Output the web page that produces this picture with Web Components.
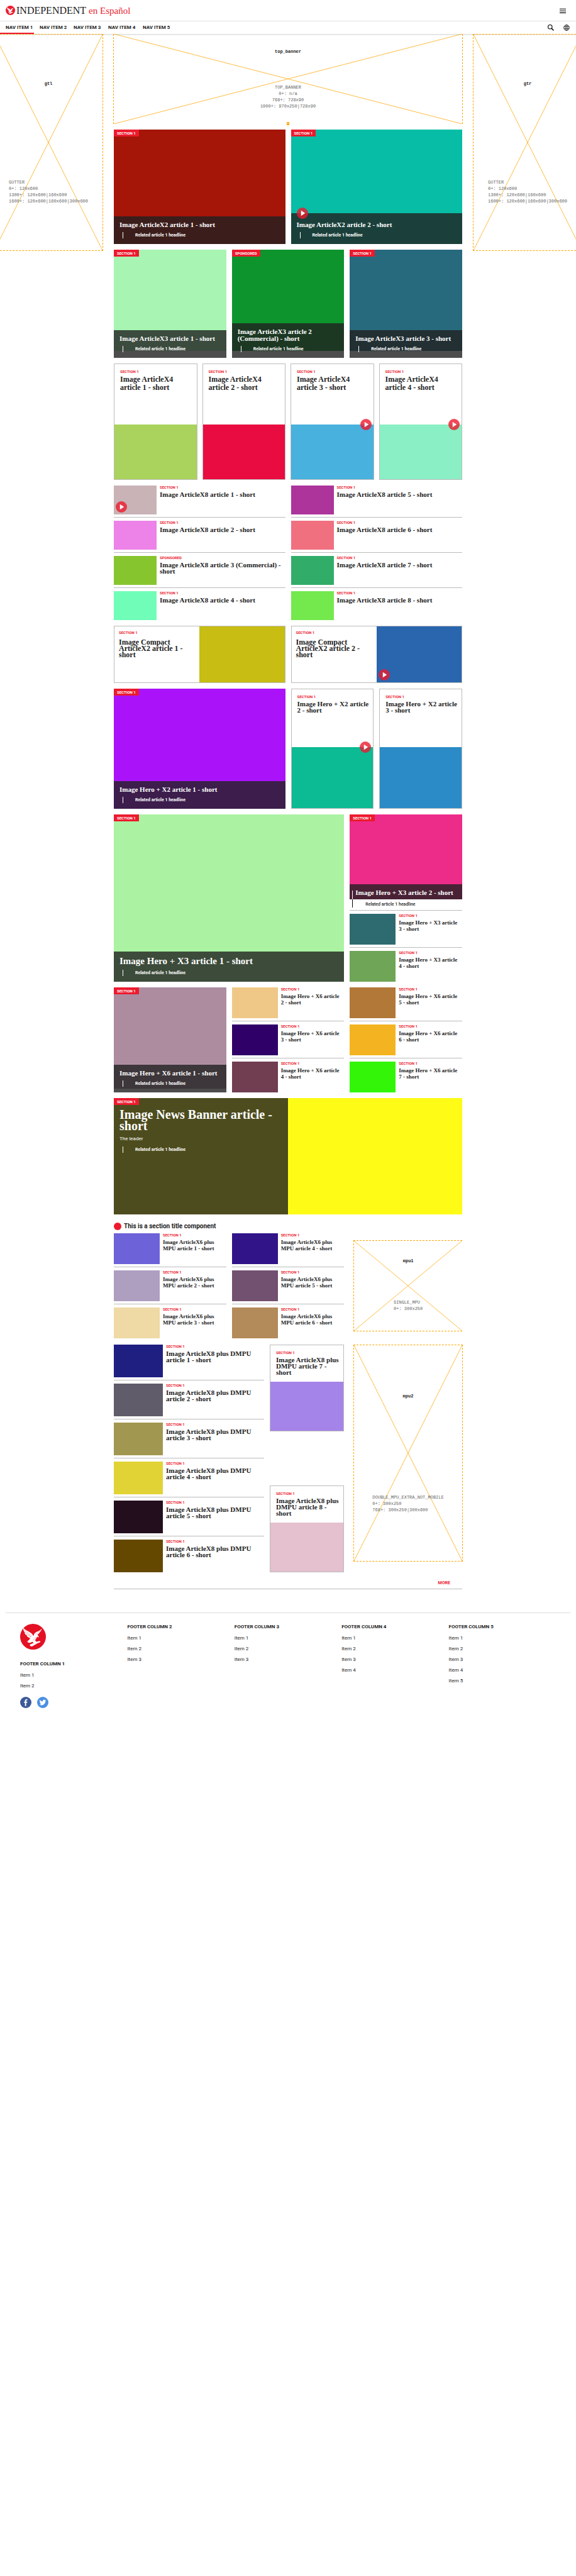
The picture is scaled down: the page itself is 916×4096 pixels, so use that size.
<!DOCTYPE html>
<html lang="es">
<head>
<meta charset="utf-8">
<meta name="viewport" content="width=device-width, initial-scale=1">
<title>Independent en Español</title>
<style>
  body {
    margin: 0;
    background: #fff;
    color: #222;
    font-family: Roboto, "Open Sans", sans-serif;
    font-size: 8px;
    --red: #ec1a2e;
    --rule: #bbb;
    --veil: rgba(32, 32, 32, .8);
    --serif: "Liberation Serif", serif;
    --mono: "Liberation Mono", monospace;
  }
</style>
</head>
<body>
<ind-header></ind-header>
<ind-layout>
  <ind-ad slot="left" name="gtl" sizes="GUTTER;0+: 120x600;1300+: 120x600|160x600;1600+: 120x600|160x600|300x600" style="--h:345px;--lift:15px"></ind-ad>
  <ind-ad slot="right" name="gtr" sizes="GUTTER;0+: 120x600;1300+: 120x600|160x600;1600+: 120x600|160x600|300x600" style="--h:345px;--lift:15px"></ind-ad>

  <ind-ad name="top_banner" sizes="TOP_BANNER;0+: n/a;768+: 728x90;1000+: 970x250|728x90" sides center marker style="--h:143px;--lift:15px"></ind-ad>

  <ind-row kind="x2" style="--h:182px">
    <ind-overlay color="#a51508" label="SECTION 1" related="Related article 1 headline">Image ArticleX2 article 1 - short</ind-overlay>
    <ind-overlay color="#08bda5" label="SECTION 1" related="Related article 1 headline" play>Image ArticleX2 article 2 - short</ind-overlay>
  </ind-row>

  <ind-row kind="x3" style="--h:172px;--media:161px">
    <ind-overlay color="#a7f4b3" label="SECTION 1" related="Related article 1 headline">Image ArticleX3 article 1 - short</ind-overlay>
    <ind-overlay color="#0d942d" label="SPONSORED" related="Related article 1 headline">Image ArticleX3 article 2 (Commercial) - short</ind-overlay>
    <ind-overlay color="#286a7d" label="SECTION 1" related="Related article 1 headline">Image ArticleX3 article 3 - short</ind-overlay>
  </ind-row>

  <ind-row kind="x4" style="--h:185px;--media:87px;--size:12px;--lead:13px">
    <ind-card color="#a9d35c" label="SECTION 1">Image ArticleX4 article 1 - short</ind-card>
    <ind-card color="#e90c40" label="SECTION 1">Image ArticleX4 article 2 - short</ind-card>
    <ind-card color="#49b1dd" label="SECTION 1" play>Image ArticleX4 article 3 - short</ind-card>
    <ind-card color="#8aefc4" label="SECTION 1" play>Image ArticleX4 article 4 - short</ind-card>
  </ind-row>

  <ind-row kind="x2">
    <ind-list style="--thumb:68px;--thumb-h:46px">
      <ind-thumb color="#c9b3b6" label="SECTION 1" play>Image ArticleX8 article 1 - short</ind-thumb>
      <ind-thumb color="#ed83e8" label="SECTION 1">Image ArticleX8 article 2 - short</ind-thumb>
      <ind-thumb color="#87c52f" label="SPONSORED">Image ArticleX8 article 3 (Commercial) - short</ind-thumb>
      <ind-thumb color="#70fdb8" label="SECTION 1">Image ArticleX8 article 4 - short</ind-thumb>
    </ind-list>
    <ind-list style="--thumb:68px;--thumb-h:46px">
      <ind-thumb color="#ad349b" label="SECTION 1">Image ArticleX8 article 5 - short</ind-thumb>
      <ind-thumb color="#f07080" label="SECTION 1">Image ArticleX8 article 6 - short</ind-thumb>
      <ind-thumb color="#31ad69" label="SECTION 1">Image ArticleX8 article 7 - short</ind-thumb>
      <ind-thumb color="#74e94e" label="SECTION 1">Image ArticleX8 article 8 - short</ind-thumb>
    </ind-list>
  </ind-row>

  <ind-row kind="x2" style="--h:91px;--size:12px">
    <ind-compact color="#c7bd13" label="SECTION 1">Image Compact ArticleX2 article 1 - short</ind-compact>
    <ind-compact color="#2966ae" label="SECTION 1" play>Image Compact ArticleX2 article 2 - short</ind-compact>
  </ind-row>

  <ind-row kind="x2" style="--h:191px">
    <ind-overlay color="#aa13fa" label="SECTION 1" related="Related article 1 headline">Image Hero + X2 article 1 - short</ind-overlay>
    <ind-row kind="x2" style="--media:97px">
      <ind-card color="#0cba94" label="SECTION 1" play>Image Hero + X2 article 2 - short</ind-card>
      <ind-card color="#2b8bc6" label="SECTION 1">Image Hero + X2 article 3 - short</ind-card>
    </ind-row>
  </ind-row>

  <ind-row kind="x3">
    <ind-overlay wide color="#abf3a2" label="SECTION 1" related="Related article 1 headline" style="--size:15px;--lead:15px">Image Hero + X3 article 1 - short</ind-overlay>
    <ind-list style="--thumb:73px;--thumb-h:49px;--size:9px">
      <ind-overlay color="#ed2c89" label="SECTION 1" below="Related article 1 headline" style="--h:135px;--size:11px">Image Hero + X3 article 2 - short</ind-overlay>
      <ind-thumb color="#2e6b70" label="SECTION 1">Image Hero + X3 article 3 - short</ind-thumb>
      <ind-thumb color="#6fa556" label="SECTION 1">Image Hero + X3 article 4 - short</ind-thumb>
    </ind-list>
  </ind-row>

  <ind-row kind="x3">
    <ind-overlay color="#ad8ca0" label="SECTION 1" related="Related article 1 headline" style="--media:161px">Image Hero + X6 article 1 - short</ind-overlay>
    <ind-list style="--thumb:73px;--thumb-h:49px;--size:9px">
      <ind-thumb color="#efc887" label="SECTION 1">Image Hero + X6 article 2 - short</ind-thumb>
      <ind-thumb color="#300069" label="SECTION 1">Image Hero + X6 article 3 - short</ind-thumb>
      <ind-thumb color="#703d51" label="SECTION 1">Image Hero + X6 article 4 - short</ind-thumb>
    </ind-list>
    <ind-list style="--thumb:73px;--thumb-h:49px;--size:9px">
      <ind-thumb color="#b27838" label="SECTION 1">Image Hero + X6 article 5 - short</ind-thumb>
      <ind-thumb color="#f4b421" label="SECTION 1">Image Hero + X6 article 6 - short</ind-thumb>
      <ind-thumb color="#33f508" label="SECTION 1">Image Hero + X6 article 7 - short</ind-thumb>
    </ind-list>
  </ind-row>

  <ind-banner color="#fefb16" label="SECTION 1" leader="The leader" related="Related article 1 headline" style="--h:185px;--size:20px;--lead:18px">Image News Banner article - short</ind-banner>

  <ind-section heading="This is a section title component">
    <ind-row kind="x3">
      <ind-list style="--thumb:73px;--thumb-h:49px;--size:9px">
        <ind-thumb color="#6e62d9" label="SECTION 1">Image ArticleX6 plus MPU article 1 - short</ind-thumb>
        <ind-thumb color="#ae9ec0" label="SECTION 1">Image ArticleX6 plus MPU article 2 - short</ind-thumb>
        <ind-thumb color="#efd9a4" label="SECTION 1">Image ArticleX6 plus MPU article 3 - short</ind-thumb>
      </ind-list>
      <ind-list style="--thumb:73px;--thumb-h:49px;--size:9px">
        <ind-thumb color="#321489" label="SECTION 1">Image ArticleX6 plus MPU article 4 - short</ind-thumb>
        <ind-thumb color="#725070" label="SECTION 1">Image ArticleX6 plus MPU article 5 - short</ind-thumb>
        <ind-thumb color="#b38a59" label="SECTION 1">Image ArticleX6 plus MPU article 6 - short</ind-thumb>
      </ind-list>
      <ind-ad mpu name="mpu1" sizes="SINGLE_MPU;0+: 300x250" open-right style="--h:145px;--lift:8px"></ind-ad>
    </ind-row>
    <ind-row kind="dmpu">
      <ind-list style="--thumb:78px;--thumb-h:52px">
        <ind-thumb color="#1f1f82" label="SECTION 1">Image ArticleX8 plus DMPU article 1 - short</ind-thumb>
        <ind-thumb color="#605c69" label="SECTION 1">Image ArticleX8 plus DMPU article 2 - short</ind-thumb>
        <ind-thumb color="#a29750" label="SECTION 1">Image ArticleX8 plus DMPU article 3 - short</ind-thumb>
        <ind-thumb color="#e1d335" label="SECTION 1">Image ArticleX8 plus DMPU article 4 - short</ind-thumb>
        <ind-thumb color="#230e1e" label="SECTION 1">Image ArticleX8 plus DMPU article 5 - short</ind-thumb>
        <ind-thumb color="#644800" label="SECTION 1">Image ArticleX8 plus DMPU article 6 - short</ind-thumb>
      </ind-list>
      <ind-list spread style="--h:138px;--media:78px">
        <ind-card color="#a484e8" label="SECTION 1">Image ArticleX8 plus DMPU article 7 - short</ind-card>
        <ind-card color="#e5c0cf" label="SECTION 1">Image ArticleX8 plus DMPU article 8 - short</ind-card>
      </ind-list>
      <ind-ad mpu name="mpu2" sizes="DOUBLE_MPU_EXTRA_NOT_MOBILE;0+: 300x250;768+: 300x250|300x600" style="--h:345px;--lift:10px"></ind-ad>
    </ind-row>
  </ind-section>
</ind-layout>
<ind-footer></ind-footer>

<script>
const PLAY = '<svg class="play" viewBox="0 0 32 32" role="img" aria-label="Video"><circle cx="16" cy="16" r="16" fill="#ec1a2e" fill-opacity=".8"/><path d="M12 8.5v15L23.5 16z" fill="#fff"/></svg>';
const EAGLE = `<circle cx="36" cy="36" r="36" fill="currentColor"/>
  <path fill="#fff" d="M9 11c5 7 13 9 19 13 5 3 8 7 9 10 2-2 1-5 4-8 5-5 14-6 20-13-2 6-7 13-13 18 2 1 4 3 4 7l-4-2c-2 4-5 7-6 10l3 4 10-2 2 3-8 3-16 9-5-1-1-4 11-5-4-3-6 3-8-1 3-2-4-1c4-2 7-4 9-9-4-1-8-4-10-7l2 0c-4-2-7-5-8-9l2 1c-4-4-6-9-5-14z"/>
  <g stroke="currentColor" stroke-width="1" fill="none" opacity=".55"><path d="M11 17c6 5 14 8 21 19M13 23c6 4 12 6 17 14M17 29c5 2 9 4 12 8M58 17c-6 5-11 9-15 14M38 41l8-4M35 46l6-3"/></g>`;

const BASE = `
  *, *::before, *::after { box-sizing: border-box; }
  a { color: inherit; text-decoration: none; }
  h2, h3, p, ul { margin: 0; padding: 0; }
  ul { list-style: none; }
`;
const ARTICLE = BASE + `
  :host { display: grid; position: relative; min-width: 0; height: var(--h, auto); }
  .tag { color: var(--red); font-size: 6px; font-weight: 700; line-height: 6px; white-space: nowrap; justify-self: start; }
  .tag.badge { color: #fff; background: var(--red); font-size: 6px; line-height: 11px; padding: 0 5px; align-self: start; }
  h3 { font: 700 var(--size, 11px)/var(--lead, 10px) var(--serif); }
  .play { display: block; width: 18px; height: 18px; position: absolute; }
  .related { margin: 6px 0 0 5px; padding-left: 19px; border-left: 1px solid #fff; font-size: 7px; font-weight: 700; line-height: 10px; }
`;

class Piece extends HTMLElement {
  connectedCallback() {
    if (this.shadowRoot) return;
    const t = document.createElement('template');
    t.innerHTML = `<style>${this.css()}</style>${this.html()}`;
    this.attachShadow({ mode: 'open' }).append(t.content.cloneNode(true));
  }
  at(name) { return this.getAttribute(name) || ''; }
  has(name) { return this.hasAttribute(name); }
  get play() { return this.has('play') ? PLAY : ''; }
  tag(cls = '') { return `<a class="tag ${cls}" href="#section">${this.at('label')}</a>`; }
  get title() { return '<h3><a href="#article"><slot></slot></a></h3>'; }
  get related() {
    return this.has('related') ? `<p class="related"><a href="#related">${this.at('related')}</a></p>` : '';
  }
}

customElements.define('ind-header', class extends Piece {
  css() { return BASE + `
    :host { display: block; position: relative; background: #fff; box-shadow: 0 1px 2px rgba(0,0,0,.2); }
    .bar { height: 34px; display: flex; align-items: center; justify-content: space-between; padding: 0 16px 0 9px; border-bottom: 1px solid #e3e3e3; }
    .logo { display: flex; align-items: center; font: 16px/18px var(--serif); color: #1b1b1b; white-space: nowrap; }
    .logo svg { width: 15px; height: 15px; color: var(--red); margin-right: 2px; }
    .logo b { font-weight: 400; font-size: 16px; }
    .logo i { font-style: normal; font-size: 15px; color: var(--red); margin-left: 4px; }
    nav { height: 20px; display: flex; align-items: stretch; }
    ul { display: flex; flex: 1; }
    li a { display: flex; width: 55px; height: 20px; padding-left: 8px; align-items: center; font-size: 8px; font-weight: 700; line-height: 10px; white-space: nowrap; border-bottom: 2px solid transparent; border-top: 2px solid transparent; }
    li:first-child a { width: 54px; padding-left: 9px; border-bottom-color: var(--red); }
    li:nth-child(2) a { padding-left: 9px; }
    button { border: 0; padding: 0; background: none; width: 10px; height: 10px; color: #111; }
    button svg { display: block; width: 10px; height: 10px; }
    .tools { display: flex; gap: 15px; align-items: center; padding-right: 10px; }
  `; }
  html() { return `
    <div class="bar">
      <a class="logo" href="#home"><svg viewBox="0 0 72 72" aria-hidden="true">${EAGLE}</svg><b>INDEPENDENT</b><i>en Español</i></a>
      <button type="button" aria-label="Menu"><svg viewBox="0 0 18 18"><path d="M0 4h18M0 9.5h18M0 15h18" stroke="#000" stroke-width="2"/></svg></button>
    </div>
    <nav>
      <ul>${[1, 2, 3, 4, 5].map(n => `<li><a href="#nav${n}">NAV ITEM ${n}</a></li>`).join('')}</ul>
      <div class="tools">
        <button type="button" aria-label="Search"><svg viewBox="0 0 18 18" fill="none" stroke="#000"><circle cx="6.8" cy="6.8" r="5.8" stroke-width="2"/><path d="M11 11l6 6" stroke-width="2.6"/></svg></button>
        <button type="button" aria-label="Edition"><svg viewBox="0 0 18 18" fill="none" stroke="#222" stroke-width="1.4"><circle cx="9" cy="9" r="8"/><ellipse cx="9" cy="9" rx="3.8" ry="8"/><path d="M9 1v16M1.5 6.2h15M1.5 11.8h15"/></svg></button>
      </div>
    </nav>`; }
});

customElements.define('ind-layout', class extends Piece {
  css() { return BASE + `
    :host { display: block; overflow: hidden; }
    .grid { display: grid; grid-template-columns: 174px minmax(0, 1fr) 174px; gap: 17px; margin: 0 -10px; align-items: start; }
    main { display: flex; flex-direction: column; gap: 9px; }
  `; }
  html() { return `<div class="grid"><aside><slot name="left"></slot></aside><main><slot></slot></main><aside><slot name="right"></slot></aside></div>`; }
});

customElements.define('ind-row', class extends Piece {
  css() { return BASE + `
    :host { display: grid; gap: 9px; min-width: 0; }
    :host([kind=x2]) { grid-template-columns: repeat(2, minmax(0, 1fr)); }
    :host([kind=x3]) { grid-template-columns: repeat(3, minmax(0, 1fr)); }
    :host([kind=x4]) { grid-template-columns: repeat(4, minmax(0, 1fr)); gap: 8px; }
    :host([kind=dmpu]) { grid-template-columns: minmax(0, 1fr) 118px 179px; column-gap: 9px; }
    ::slotted([wide]) { grid-column: span 2; }
  `; }
  html() { return '<slot></slot>'; }
});

customElements.define('ind-list', class extends Piece {
  css() { return BASE + `
    :host { display: flex; flex-direction: column; min-width: 0; }
    :host([spread]) { justify-content: space-between; }
    :host(:not([spread])) ::slotted(:not(:first-child)) { margin-top: 4px; border-top: 1px solid var(--rule); padding-top: 5px; }
  `; }
  html() { return '<slot></slot>'; }
});

customElements.define('ind-overlay', class extends Piece {
  css() { return ARTICLE + `
    :host { height: auto; grid-template-rows: minmax(0, 1fr) auto; }
    .box { display: grid; min-height: var(--h, 100%); }
    .box > * { grid-area: 1 / 1; }
    .media { background: ${this.at('color')}; height: var(--media, 100%); }
    .tag { z-index: 1; }
    .cap { align-self: end; position: relative; background: var(--veil); color: #fff; padding: 8px 9px 9px; }
    .play { top: -9px; left: 9px; }
    :host([play]) .cap { padding-top: 13px; }
    h3 { line-height: var(--lead, 11px); }
    :host([below]) .cap { padding: 8px 9px 5px; }
    .below { position: relative; padding: 3px 0 0 25px; font-size: 7px; font-weight: 500; line-height: 10px; }
    .below::before { content: ""; position: absolute; left: 4px; bottom: 0; width: 1px; height: 27px; background: linear-gradient(#fff 14px, #000 14px); }
  `; }
  html() { return `
    <div class="box"><div class="media"></div>${this.tag('badge')}
      <div class="cap">${this.play}${this.title}${this.related}</div></div>
    ${this.has('below') ? `<p class="below"><a href="#related">${this.at('below')}</a></p>` : ''}`; }
});

customElements.define('ind-card', class extends Piece {
  css() { return ARTICLE + `
    :host { box-sizing: border-box; grid-template-rows: minmax(0, 1fr) auto; border: 1px solid var(--rule); height: var(--h, 100%); }
    .text { display: flex; flex-direction: column; gap: 3px; align-items: flex-start; padding: 9px 4px 0 9px; }
    .media { position: relative; height: var(--media); background: ${this.at('color')}; }
    .play { top: -9px; right: 3px; }
  `; }
  html() { return `<div class="text">${this.tag()}${this.title}</div><div class="media">${this.play}</div>`; }
});

customElements.define('ind-thumb', class extends Piece {
  css() { return ARTICLE + `
    :host { height: auto; grid-template-columns: var(--thumb) minmax(0, 1fr); column-gap: 5px; }
    .media { position: relative; height: var(--thumb-h); background: ${this.at('color')}; }
    .text { display: flex; flex-direction: column; gap: 3px; align-items: flex-start; padding-right: 4px; }
    .play { left: 3px; bottom: 3px; }
  `; }
  html() { return `<div class="media">${this.play}</div><div class="text">${this.tag()}${this.title}</div>`; }
});

customElements.define('ind-compact', class extends Piece {
  css() { return ARTICLE + `
    :host { box-sizing: border-box; grid-template-columns: 1fr 1fr; border: 1px solid var(--rule); }
    .text { display: flex; flex-direction: column; gap: 7px; align-items: flex-start; padding: 7px; }
    .media { position: relative; background: ${this.at('color')}; }
    .play { left: 3px; bottom: 3px; }
  `; }
  html() { return `<div class="text">${this.tag()}${this.title}</div><div class="media">${this.play}</div>`; }
});

customElements.define('ind-banner', class extends Piece {
  css() { return ARTICLE + `
    :host { grid-template-columns: 1fr 1fr; background: ${this.at('color')}; color: #fff; }
    .text { background: var(--veil); }
    .tag { display: block; width: max-content; }
    .body { padding: 6px 9px 0; }
    .leader { margin-top: 7px; font-size: 8px; line-height: 10px; }
    .related { margin-top: 7px; }
  `; }
  html() { return `<div class="text">${this.tag('badge')}<div class="body">${this.title}<p class="leader">${this.at('leader')}</p>${this.related}</div></div>`; }
});

customElements.define('ind-ad', class extends Piece {
  css() { return BASE + `
    :host { display: block; min-width: 0; }
    .ad { position: relative; height: var(--h); border: 1px dashed orange; color: #222; font: 7px/10px var(--mono); display: grid; grid-template-rows: 1fr 1fr; justify-items: center; align-items: center; }
    :host([sides]) .ad { border-width: 0 1px; margin: 0 -1px; }
    :host([mpu]) .ad { margin: 0 -1px 0 6px; }
    :host([open-right]) { align-self: center; }
    :host([open-right]) .ad { margin-right: 0; border-right: 0; }
    .lines { position: absolute; inset: 0; width: 100%; height: 100%; }
    b, ul { position: relative; margin-bottom: var(--lift); }
    li { color: #666; white-space: pre; }
    :host([center]) li { text-align: center; }
    .mark { position: absolute; bottom: -2px; left: calc(50% - 2px); width: 4px; height: 5px; background: orange; color: #fff; font-size: 4px; line-height: 5px; text-align: center; }
  `; }
  html() { return `<div class="ad">
    <svg class="lines" viewBox="0 0 100 100" preserveAspectRatio="none" aria-hidden="true"><path d="M0 0L100 100M100 0L0 100" stroke="orange" stroke-opacity=".75" fill="none" vector-effect="non-scaling-stroke"/></svg>
    <b>${this.at('name')}</b>
    <ul>${this.at('sizes').split(';').map(s => `<li>${s}</li>`).join('')}</ul>
    ${this.has('marker') ? '<span class="mark">o</span>' : ''}</div>`; }
});

customElements.define('ind-section', class extends Piece {
  css() { return BASE + `
    :host { display: block; }
    h2 { display: flex; align-items: center; gap: 4px; padding: 4px 0 5px; font-size: 10px; font-weight: 700; line-height: 12px; }
    h2::before { content: ""; width: 12px; height: 12px; border-radius: 50%; background: var(--red); }
    .rows { display: flex; flex-direction: column; gap: 10px; }
    .more { display: flex; justify-content: flex-end; padding: 13px 19px 4px; border-bottom: 1px solid var(--rule); color: var(--red); font-size: 7px; font-weight: 700; line-height: 9px; }
  `; }
  html() { return `<section><h2>${this.at('heading')}</h2><div class="rows"><slot></slot></div><div class="more"><a href="#more">MORE</a></div></section>`; }
});

customElements.define('ind-footer', class extends Piece {
  css() { return BASE + `
    :host { display: block; margin: 37px 9px 0; border-top: 1px solid #ddd; }
    footer { display: grid; grid-template-columns: repeat(5, minmax(0, 1fr)); padding: 17px 23px 32px; }
    .logo { display: block; width: 41px; height: 41px; margin-bottom: 18px; color: #e41023; }
    .logo svg { display: block; width: 41px; height: 41px; }
    h2 { font-size: 8px; font-weight: 700; line-height: 10px; margin-bottom: 4px; }
    li { font-size: 8px; line-height: 17px; }
    .social { display: flex; gap: 9px; margin-top: 9px; }
    .social svg { display: block; width: 18px; height: 18px; }
  `; }
  html() {
    const col = (n, count) => `<h2>FOOTER COLUMN ${n}</h2><ul>${Array.from({ length: count }, (_, i) => `<li><a href="#item">Item ${i + 1}</a></li>`).join('')}</ul>`;
    return `<footer>
      <div><a class="logo" href="#home" aria-label="Independent"><svg viewBox="0 0 72 72">${EAGLE}</svg></a>${col(1, 2)}
        <div class="social">
          <a href="#facebook" aria-label="Facebook"><svg viewBox="0 0 32 32"><circle cx="16" cy="16" r="16" fill="#3b5998"/><path fill="#fff" d="M13.6 26V17H11v-3.4h2.6v-2.7C13.600 8 15.300 6.500 18 6.500c1.200 0 2.300.1 2.600.1v3.100h-1.800c-1.400 0-1.700.7-1.700 1.700v2.200h3.300L20 17h-2.900v9z"/></svg></a>
          <a href="#twitter" aria-label="Twitter"><svg viewBox="0 0 32 32"><circle cx="16" cy="16" r="16" fill="#4a90e2"/><path fill="#fff" d="M25.500 10.200c-.7.300-1.500.5-2.200.6.800-.5 1.400-1.200 1.700-2.100-.8.400-1.600.7-2.500.9a3.900 3.900 0 0 0-6.700 3.600 11.100 11.100 0 0 1-8.100-4.100 3.900 3.900 0 0 0 1.200 5.200c-.6 0-1.200-.2-1.800-.5a3.900 3.900 0 0 0 3.100 3.900c-.6.100-1.200.2-1.800.1a3.900 3.900 0 0 0 3.700 2.700A7.900 7.900 0 0 1 6.400 22a11.100 11.100 0 0 0 17.100-9.900c.8-.5 1.400-1.200 2-1.900z"/></svg></a>
        </div></div>
      <div>${col(2, 3)}</div><div>${col(3, 3)}</div><div>${col(4, 4)}</div><div>${col(5, 5)}</div>
    </footer>`;
  }
});
</script>
</body>
</html>
